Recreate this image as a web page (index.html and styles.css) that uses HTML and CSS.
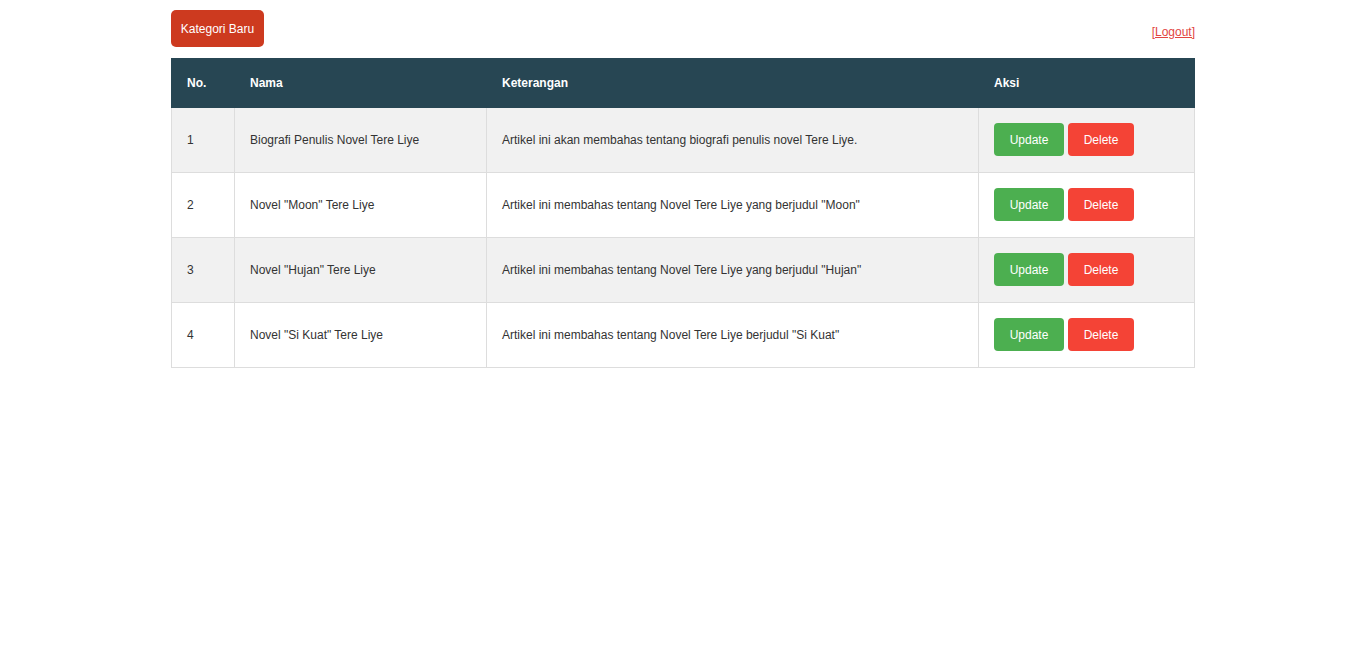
FILE: index.html
```html
<!DOCTYPE html>
<html>
<head>
<meta charset="utf-8">
<link rel="stylesheet" href="styles.css">
</head>
<body>
<div class="container">
  <div class="topbar">
    <a class="btn-new" href="#">Kategori Baru</a>
    <a class="logout" href="#">[Logout]</a>
  </div>
  <table class="data">
    <thead>
      <tr>
        <th class="c-no">No.</th>
        <th class="c-nama">Nama</th>
        <th class="c-ket">Keterangan</th>
        <th class="c-aksi">Aksi</th>
      </tr>
    </thead>
    <tbody>
      <tr>
        <td>1</td>
        <td>Biografi Penulis Novel Tere Liye</td>
        <td>Artikel ini akan membahas tentang biografi penulis novel Tere Liye.</td>
        <td><div class="actions"><a class="btn btn-update" href="#">Update</a><a class="btn btn-delete" href="#">Delete</a></div></td>
      </tr>
      <tr>
        <td>2</td>
        <td>Novel "Moon" Tere Liye</td>
        <td>Artikel ini membahas tentang Novel Tere Liye yang berjudul "Moon"</td>
        <td><div class="actions"><a class="btn btn-update" href="#">Update</a><a class="btn btn-delete" href="#">Delete</a></div></td>
      </tr>
      <tr>
        <td>3</td>
        <td>Novel "Hujan" Tere Liye</td>
        <td>Artikel ini membahas tentang Novel Tere Liye yang berjudul "Hujan"</td>
        <td><div class="actions"><a class="btn btn-update" href="#">Update</a><a class="btn btn-delete" href="#">Delete</a></div></td>
      </tr>
      <tr>
        <td>4</td>
        <td>Novel "Si Kuat" Tere Liye</td>
        <td>Artikel ini membahas tentang Novel Tere Liye berjudul "Si Kuat"</td>
        <td><div class="actions"><a class="btn btn-update" href="#">Update</a><a class="btn btn-delete" href="#">Delete</a></div></td>
      </tr>
    </tbody>
  </table>
</div>
</body>
</html>
```

FILE: styles.css
```css
* { box-sizing: border-box; }
html, body { margin: 0; padding: 0; background: #fff; }
body {
  font-family: "Liberation Sans", Arial, sans-serif;
  font-size: 12px;
  color: #333;
}
.container {
  width: 1024px;
  margin: 0 auto;
  padding-top: 10px;
}
.topbar {
  display: flex;
  justify-content: space-between;
  align-items: flex-end;
  margin-bottom: 11px;
}
.btn-new {
  display: block;
  background: #cd3a1f;
  color: #fff;
  text-decoration: none;
  white-space: nowrap;
  padding-top: 1px;
  line-height: 36px;
  height: 37px;
  width: 93px;
  text-align: center;
  border-radius: 5px;
}
.logout {
  color: #e2453f;
  text-decoration: underline;
  line-height: 14px;
  margin-bottom: 8px;
}
.data {
  width: 1024px;
  border-collapse: collapse;
  border: 1px solid #ddd;
}
.data th {
  background: #274653;
  color: #fff;
  font-weight: bold;
  text-align: left;
  height: 49px;
  padding: 0 15px;
  border: 1px solid #274653;
}
.data td {
  height: 65px;
  padding: 0 15px;
  border: 1px solid #ddd;
  vertical-align: middle;
}
.data tbody tr:nth-child(odd) td { background: #f1f1f1; }
.c-no { width: 63px; }
.c-nama { width: 252px; }
.c-ket { width: 492px; }
.actions {
  display: flex;
  gap: 4px;
  margin-top: -1px;
}
.btn {
  display: block;
  color: #fff;
  text-decoration: none;
  height: 33px;
  padding-top: 1px;
  line-height: 32px;
  border-radius: 4px;
  text-align: center;
  white-space: nowrap;
}
.btn-update { background: #4caf50; width: 70px; }
.btn-delete { background: #f44336; width: 66px; }
```
